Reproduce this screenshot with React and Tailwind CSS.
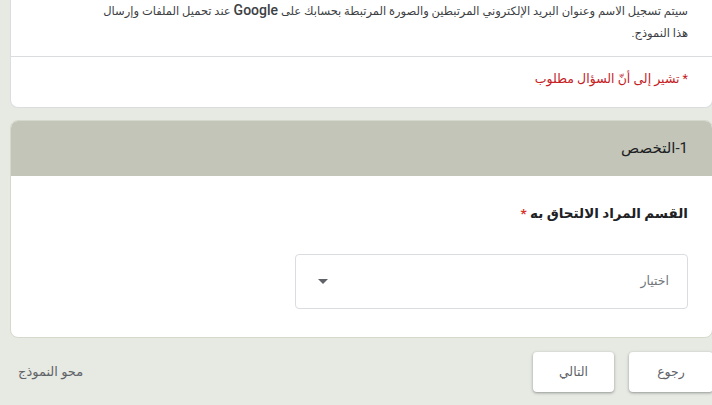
import React from 'react';

const font = { fontFamily: 'Roboto, Arial, "DejaVu Sans", sans-serif' };

const Card = ({ children, className = '' }) => (
    <div className={`bg-white rounded-lg border border-[#dadce0] ${className}`}>{children}</div>
);

export default function App() {
    return (
        <div dir="rtl" style={font} className="w-[712px] h-[405px] overflow-hidden bg-[#e7e9e3] text-[#202124]">
            <div className="mr-[-1px] ml-[10px]">
                {/* intro card, top cut off */}
                <Card className="rounded-t-none border-t-0">
                    <div className="px-6 pb-3 text-[11.5px] leading-[22px] text-[#3c4043] -mt-px">
                        <div className="whitespace-nowrap">
                            سيتم تسجيل الاسم وعنوان البريد الإلكتروني المرتبطين والصورة المرتبطة بحسابك على <span className="font-medium text-[14px]">Google</span> عند تحميل الملفات وإرسال
                        </div>
                        <div>هذا النموذج.</div>
                    </div>
                    <div className="border-t border-[#dadce0] px-6 pt-3 pb-[18px] text-[12.5px] leading-5 text-[#c5221f]">
                        * تشير إلى أنّ السؤال مطلوب
                    </div>
                </Card>

                {/* section card */}
                <div className="mt-3 rounded-lg overflow-hidden border border-[#d5d8cc] bg-white">
                    <div className="h-[55px] bg-[#c2c5b7] px-6 flex items-center">
                        <h2 className="text-[15px] text-[#202124]">1-التخصص</h2>
                    </div>
                    <div className="px-6 pt-[27px] pb-[28px]">
                        <div className="text-[13.5px] leading-5 font-bold text-[#202124]">
                            القسم المراد الالتحاق به <span className="text-[#d93025]">*</span>
                        </div>
                        <div className="mt-[31px] w-[393px] h-[55px] border border-[#dadce0] rounded flex items-center justify-between pr-[18px] pl-[22px]">
                            <span className="text-[12.5px] text-[#70757a]">اختيار</span>
                            <svg width="10" height="5" viewBox="0 0 10 5" className="text-[#5f6368]">
                                <path d="M0 0h10L5 5z" fill="currentColor" />
                            </svg>
                        </div>
                    </div>
                </div>
            </div>

            {/* footer */}
            <div className="mt-[14px] flex items-center justify-between mr-[-1px] ml-[18px]">
                <div className="flex gap-[15px]">
                    <button className="w-[84px] h-10 bg-white rounded shadow-[0_1px_2px_rgba(60,64,67,0.3),0_1px_3px_1px_rgba(60,64,67,0.15)] text-[12.5px] text-[#5f6368]">
                        رجوع
                    </button>
                    <button className="w-[81px] h-10 bg-white rounded shadow-[0_1px_2px_rgba(60,64,67,0.3),0_1px_3px_1px_rgba(60,64,67,0.15)] text-[12.5px] text-[#5f6368]">
                        التالي
                    </button>
                </div>
                <span className="text-[13px] text-[#5f6368]">محو النموذج</span>
            </div>
        </div>
    );
}
